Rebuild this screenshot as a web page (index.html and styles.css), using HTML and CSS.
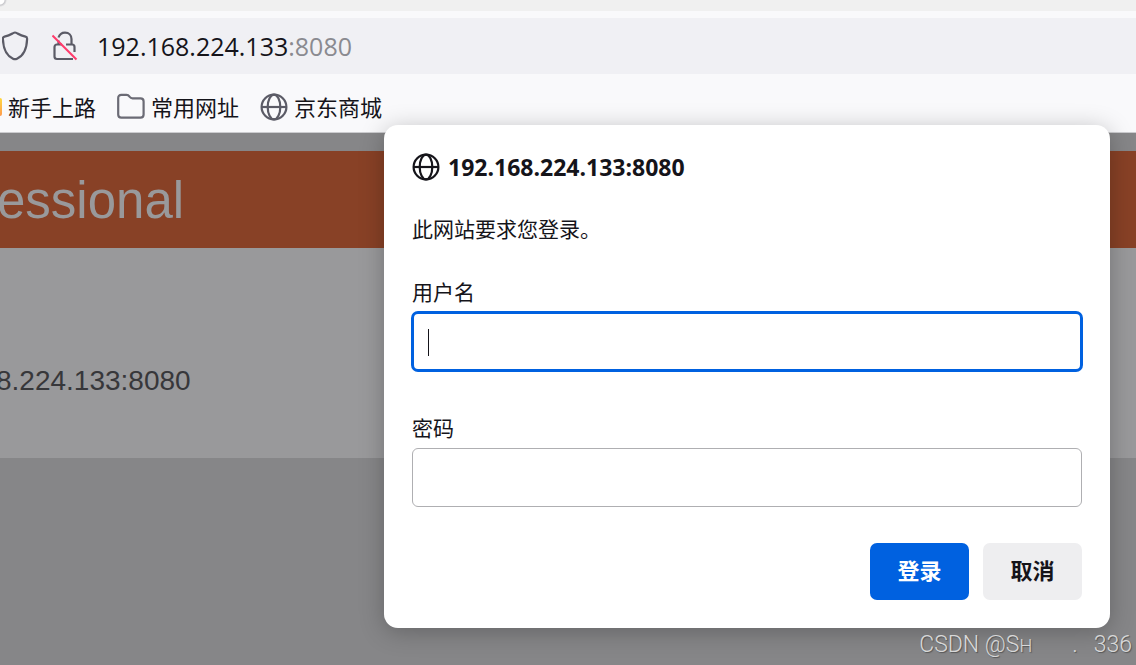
FILE: index.html
```html
<!doctype html>
<html lang="zh-CN">
<head>
    <meta charset="utf-8">
    <title>192.168.224.133:8080</title>
    <link rel="stylesheet" href="styles.css">
</head>
<body>
    <svg class="sprite" aria-hidden="true">
        <symbol id="globe" viewBox="0 0 28 28">
            <g fill="none" stroke="currentColor" stroke-width="2.2">
                <circle cx="14" cy="14" r="12.4"/>
                <ellipse cx="14" cy="14" rx="6.3" ry="12.4"/>
                <path d="M1.6 14h24.8"/>
            </g>
        </symbol>
    </svg>

    <header class="browser">
        <div class="tabs"></div>
        <div class="urlbar">
            <svg class="shield" width="28" height="30" viewBox="0 0 28 30">
                <path d="M13 1.5C14 1.5 14.4 1.9 15.5 2.5C18 4 20.5 5 23.5 5.6C24.7 5.9 25.2 6.7 25.1 8C24.8 17 22.3 24.4 15 27.7C13.5 28.4 12.5 28.4 11 27.7C3.7 24.4 1.2 17 .9 8C.8 6.7 1.3 5.9 2.5 5.6C5.5 5 8 4 10.5 2.5C11.6 1.9 12 1.5 13 1.5Z" fill="none" stroke="#5b5b66" stroke-width="2.2"/>
            </svg>
            <svg class="lock" width="26" height="30" viewBox="0 0 26 30">
                <g fill="none" stroke="#5b5b66" stroke-width="2.2">
                    <path d="M6.5 6.5C7.5 3.5 9.8 1.6 13 1.6C17 1.6 19.500 4.5 19.5 8V13.5"/>
                    <path d="M14 13.5H20C21.500 13.5 22.5 14.5 22.5 16V21"/>
                    <path d="M10 13.5H5C3.5 13.5 2.5 14.5 2.5 16V25.5C2.5 27 3.5 28 5 28H21"/>
                    <path d="M6.5 9.5V13.5"/>
                </g>
                <path d="M.5 4.500L24.5 28.5" stroke="#ff3b6b" stroke-width="2"/>
            </svg>
            <span class="url">192.168.224.133<span class="port">:8080</span></span>
        </div>
        <nav class="bookmarks">
            <a href="#"><span class="fox"></span>新手上路</a>
            <a href="#">
                <svg width="28" height="28" viewBox="0 0 28 28">
                    <path d="M1.2 5V21.5C1.2 23.5 2.3 24.6 4.3 24.6H23.5C25.5 24.6 26.6 23.5 26.6 21.5V8.5C26.6 6.5 25.5 5.4 23.5 5.4H15.5C14 5.4 13.3 4.8 12.5 3.7C11.7 2.5 11 1.9 9.5 1.9H4.3C2.3 1.9 1.2 3 1.2 5Z" fill="none" stroke="#6b6b75" stroke-width="2.2"/>
                </svg>常用网址</a>
            <a href="#"><svg width="28" height="28"><use href="#globe"/></svg>京东商城</a>
        </nav>
    </header>

    <main class="page">
        <h1>essional</h1>
        <div class="content">8.224.133:8080</div>
    </main>

    <div class="overlay">
        <form class="dialog" role="dialog">
            <div class="origin"><svg width="28" height="28"><use href="#globe"/></svg>192.168.224.133:8080</div>
            <p class="message">此网站要求您登录。</p>
            <div class="field">
                <label for="username">用户名</label>
                <input class="active" type="text" id="username">
                <span class="caret"></span>
            </div>
            <div class="field">
                <label for="password">密码</label>
                <input type="password" id="password">
            </div>
            <div class="buttons">
                <button class="primary" type="submit">登录</button>
                <button type="button">取消</button>
            </div>
        </form>
    </div>

    <div class="watermark"><span>CSDN @S<small>H</small></span><span>.</span><span>336</span></div>
</body>
</html>
```
FILE: styles.css
```css
* {
    box-sizing: border-box;
}
body {
    margin: 0;
    min-height: 100vh;
    display: flex;
    flex-direction: column;
    position: relative;
    overflow: hidden;
    background-color: #868688;
    color: #15141a;
    font-family: "Open Sans", "Noto Sans CJK SC", sans-serif;
}
svg {
    flex: none;
}
.sprite {
    position: absolute;
    width: 0;
    height: 0;
}

/* browser chrome */
.browser {
    background-color: #f9f9fb;
    border-bottom: 1px solid #cccccf;
}
.tabs {
    height: 11px;
    background-color: #f0f0f0;
    background-image: radial-gradient(circle at 0 0, #fff 4px, #c8c8cc 5px, #f0f0f0 7px);
    margin-bottom: 7px;
}
.urlbar {
    display: flex;
    align-items: center;
    height: 56px;
    padding-left: 2px;
    background-color: #f0f0f4;
}
.lock {
    margin: 0 19px 0 22px;
}
.url {
    font-size: 25px;
    line-height: 32px;
}
.port {
    color: #8a8a90;
}
.bookmarks {
    display: flex;
    gap: 21px;
    padding: 19px 0 11px;
}
.bookmarks a {
    display: flex;
    align-items: center;
    gap: 6px;
    color: #15141a;
    font-size: 22px;
    line-height: 28px;
    text-decoration: none;
}
.bookmarks svg {
    color: #5b5b66;
}
.fox {
    width: 2px;
    height: 18px;
    border-radius: 0 2px 2px 0;
    background: linear-gradient(#ffd83d, #ff9a4d);
}

/* dimmed page */
.page {
    padding-top: 18px;
    font-family: "Liberation Sans", sans-serif;
}
.page h1 {
    margin: 0;
    height: 97px;
    text-indent: -3px;
    background-color: #884126;
    color: #99999b;
    font-size: 51px;
    font-weight: normal;
    line-height: 100px;
}
.content {
    height: 210px;
    padding-top: 117px;
    text-indent: -4px;
    background-color: #99999b;
    color: #37373a;
    font-size: 28px;
    line-height: 32px;
}

/* login dialog */
.overlay {
    position: absolute;
    top: 125px;
    left: 0;
    right: 26px;
    display: flex;
    justify-content: flex-end;
}
.dialog {
    width: 726px;
    max-width: 100%;
    padding: 28px;
    border-radius: 14px;
    background-color: #fff;
    box-shadow: 0 4px 25px rgba(0, 0, 0, 0.25);
    font-size: 21px;
    line-height: 28px;
}
.origin {
    display: flex;
    align-items: center;
    gap: 8px;
    font-size: 23px;
    font-weight: bold;
}
.message {
    margin: 34px 0 35px;
}
.field {
    position: relative;
    margin-bottom: 43px;
}
.field label {
    display: block;
    margin-bottom: 6px;
}
.field input {
    display: block;
    width: 100%;
    height: 59px;
    padding: 0 14px;
    border: 1px solid #afafb2;
    border-radius: 6px;
    outline: none;
    background-color: #fff;
    font: inherit;
}
.field .active {
    border: 2px solid #0061e0;
    box-shadow: 0 0 0 1px #0061e0;
}
.caret {
    position: absolute;
    left: 16px;
    bottom: 15px;
    width: 1px;
    height: 27px;
    background-color: #15141a;
}
.buttons {
    display: flex;
    justify-content: flex-end;
    gap: 14px;
    margin-top: -7px;
}
.buttons button {
    width: 99px;
    height: 57px;
    padding: 0 0 4px;
    border: none;
    border-radius: 7px;
    background-color: #eeeef0;
    color: #15141a;
    font: inherit;
    font-size: 22px;
    font-weight: bold;
}
.buttons .primary {
    background-color: #0061e0;
    color: #fff;
}

.watermark {
    position: absolute;
    right: 4px;
    bottom: 5px;
    display: flex;
    color: #d8d8d8;
    font-family: Roboto, sans-serif;
    font-size: 23px;
    font-weight: 300;
    line-height: 28px;
    text-shadow: 1px 1px 1px #555;
    gap: 16px;
}
.watermark span:first-child {
    margin-right: 24px;
}
.watermark small {
    font-size: 18px;
}
```
